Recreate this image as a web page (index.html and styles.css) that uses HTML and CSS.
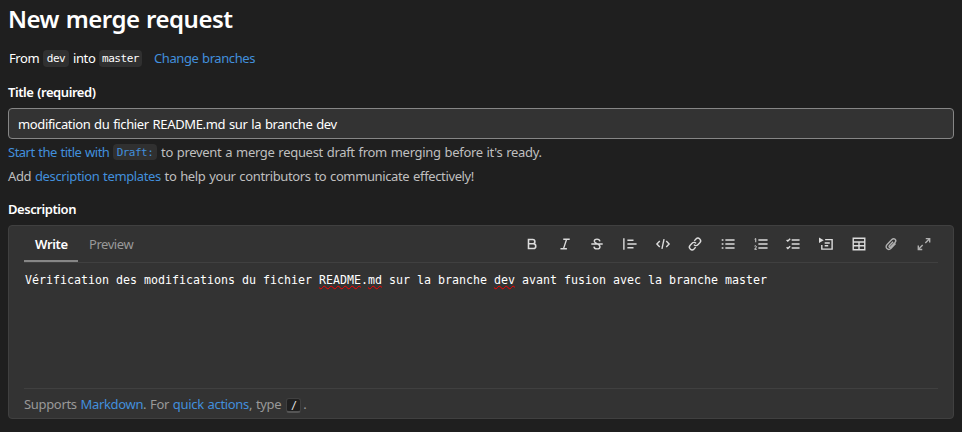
FILE: index.html
```html
<!DOCTYPE html>
<html lang="en">
<head>
<meta charset="utf-8">
<title>New merge request</title>
<link rel="stylesheet" href="styles.css">
</head>
<body>
<main class="page">
  <h1 class="heading"><span>New merge request</span></h1>
  <p class="branches"><span class="from">From</span><code class="chip chip-dev">dev</code><span class="into">into</span><code class="chip chip-master">master</code><a class="link change">Change branches</a></p>
  <h2 class="label label-title"><span>Title (required)</span></h2>
  <div class="input"><span>modification du fichier README.md sur la branche dev</span></div>
  <p class="help"><a class="link start">Start the title with</a><code class="chip chip-draft">Draft:</code><span class="prevent">to prevent a merge request draft from merging before it's ready.</span></p>
  <p class="help help-second"><span>Add <a class="link">description templates</a> to help your contributors to communicate effectively!</span></p>
  <h2 class="label label-desc"><span>Description</span></h2>
  <section class="editor">
    <header class="toolbar">
      <div class="tab active"><span>Write</span></div>
      <div class="tab preview"><span>Preview</span></div>
      <div class="tools">
        <svg viewBox="0 0 16 16"><path d="M4 2.8h4.8a2.5 2.5 0 0 1 0 5H4zM4 7.8h5.6a2.7 2.7 0 0 1 0 5.4H4z" stroke-width="1.8"/></svg>
        <svg viewBox="0 0 16 16"><path d="M6 2.5h7.4M2.8 13.5h7.4M9.8 2.7 6.3 13.3"/></svg>
        <svg viewBox="0 0 16 16"><path d="M11.3 5C11 1.5 4.8 1.6 4.9 4.8 5 7.7 11.4 7.3 11.4 11c0 3.4-6.6 3.5-6.9 0M1.5 8h13"/></svg>
        <svg viewBox="0 0 16 16"><path d="M1 1.5v13M5 3.7h7M5 8h10.5M5 12.3h7"/></svg>
        <svg viewBox="0 0 16 16"><path d="M4.3 4.5 1 8l3.3 3.5M11.7 4.5 15 8l-3.3 3.5M9.2 2.5 6.8 13.5"/></svg>
        <svg viewBox="0 0 16 16"><path d="m7.2 4.4 1.9-2.1a3 3 0 0 1 4.4 4.3l-2.2 2.3a3 3 0 0 1-4.5-.2M8.8 11.6l-1.9 2.1a3 3 0 0 1-4.4-4.3l2.2-2.3a3 3 0 0 1 4.5.2"/></svg>
        <svg viewBox="0 0 16 16"><path d="M5 3.5h10.5M5 8h10.5M5 12.5h10.5M.8 3.5h2M.8 8h2M.8 12.5h2"/></svg>
        <svg viewBox="0 0 16 16"><path d="M5 3.5h10.5M5 8h10.5M5 12.5h10.5"/><path d="M.7 2.5 2 1.8V6M.6 10.4c1.1-1 2.8.1 1.7 1.5L.8 14h2.4" stroke-width="1.1"/></svg>
        <svg viewBox="0 0 16 16"><path d="M6.5 3.5h9M6.5 8h9M6.5 12.5h9M.7 3.3l1.4 1.4L4.8 2M.7 11.8l1.4 1.4 2.7-2.7"/></svg>
        <svg viewBox="0 0 16 16"><path d="M7 3h8v10.8H3.2V9M6.5 6.8h5.8M6.5 10h4"/><path d="M0 .5v6.4l5.4-3.2z" class="solid"/></svg>
        <svg viewBox="0 0 16 16"><path d="M1.4 1.4h13.2v13.2H1.4zM1.4 5.7h13.2M1.4 10h13.2M8 5.7v8.6"/></svg>
        <svg viewBox="0 0 16 16" class="dim"><path d="M10.4 5.5 6.1 10c-1 1.2.4 2.5 1.5 1.4l5-5.2c2.4-2.7-1.1-5.8-3.6-3.3L3.6 8.5c-3.3 3.4 1.1 7.7 4.5 4.3l5.1-5.3"/></svg>
        <svg viewBox="0 0 16 16" class="dim"><path d="M10 1.8h4.5v4.5M14.3 2 9.5 6.8M6 14.2H1.5V9.7M1.7 14l4.8-4.8"/></svg>
      </div>
    </header>
    <div class="body"><span>Vérification des modifications du fichier <u>README</u>.<u>md</u> sur la branche <u>dev</u> avant fusion avec la branche master</span></div>
    <footer class="footer"><span>Supports <a class="link">Markdown</a>. For <a class="link">quick actions</a>, type</span><kbd>/</kbd><span>.</span></footer>
  </section>
</main>
</body>
</html>
```
FILE: styles.css
```css
* { box-sizing: border-box; }
body { margin: 0; background: #1f1f1f; color: #fff; font: 13px/20px "Noto Sans", sans-serif; letter-spacing: -.37px; word-spacing: .75px; }
.page { height: 432px; padding: 0 8px; overflow: hidden; display: flex; flex-direction: column; }
h1, h2, p { margin: 0; white-space: nowrap; }
.heading { height: 38px; font-size: 24px; line-height: 38px; font-weight: 600; letter-spacing: -.5px; word-spacing: .9px; }
.branches { display: flex; align-items: center; height: 20px; margin-top: 10px; }
.from { width: 31px; padding-left: 1px; letter-spacing: -.4px; }
.into { width: 22px; letter-spacing: -.4px; }
.change { letter-spacing: -.42px; }
.chip { font: 11px/17px "DejaVu Sans Mono", monospace; letter-spacing: -.45px; background: #303030; border-radius: 4px; height: 17px; text-align: center; margin: 0 4px; flex: none; }
.chip-dev { width: 26px; }
.chip-master { width: 43px; margin-right: 12px; }
.chip-draft { width: 44px; height: 16px; color: #428fdc; letter-spacing: -.5px; }
.link { color: #428fdc; }
.label { font-size: 13px; line-height: 20px; font-weight: 600; letter-spacing: -.43px; }
.label-title { margin-top: 14px; }
.input { height: 31px; margin-top: 6px; border: 1px solid #868686; border-radius: 4px; background: #333; padding: 0 9px; line-height: 30px; letter-spacing: -.36px; }
.help { display: flex; align-items: center; height: 20px; margin-top: 3px; color: #bfbfbf; }
.help-second { margin-top: 4px; }
.start { width: 101px; letter-spacing: -.5px; }
.prevent { letter-spacing: -.31px; }
.label-desc { margin-top: 13px; }
.editor { height: 194px; margin: 6px 0 0; border: 1px solid #404040; border-radius: 4px; background: #333; padding: 0 15px; display: flex; flex-direction: column; }
.toolbar { display: flex; height: 37px; border-bottom: 1px solid #404040; color: #999; }
.tab { height: 36px; padding: 0 11px; line-height: 37px; }
.active { width: 54px; border-bottom: 2px solid #868686; color: #fff; font-weight: 600; }
.preview { letter-spacing: -.45px; }
.tools { display: flex; justify-content: space-between; align-items: center; width: 406px; margin-left: auto; margin-right: 7px; }
.tools svg { width: 14px; height: 14px; overflow: visible; fill: none; stroke: #dcdcdc; stroke-width: 1.6; }
.tools .dim { stroke: #b0b0b0; }
.tools .solid { fill: #dcdcdc; stroke: none; }
.body { flex: 1; font: 11.63px/18px "DejaVu Sans Mono", monospace; letter-spacing: 0; word-spacing: 0; padding: 8px 0 0 1px; white-space: nowrap; }
.body u { text-decoration: underline wavy #f00 1px; text-underline-offset: 1px; text-decoration-skip-ink: none; }
.footer { display: flex; align-items: center; height: 30px; border-top: 1px solid #404040; color: #999; padding-top: 1px; letter-spacing: -.33px; }
kbd { width: 15px; height: 15px; margin: 2px 2px 0 5px; font: 10px/13px "DejaVu Sans Mono", monospace; color: #eee; background: #1f1f1f; border: 1px solid #404040; border-bottom: 2px solid #555; border-radius: 3px; text-align: center; }
```
